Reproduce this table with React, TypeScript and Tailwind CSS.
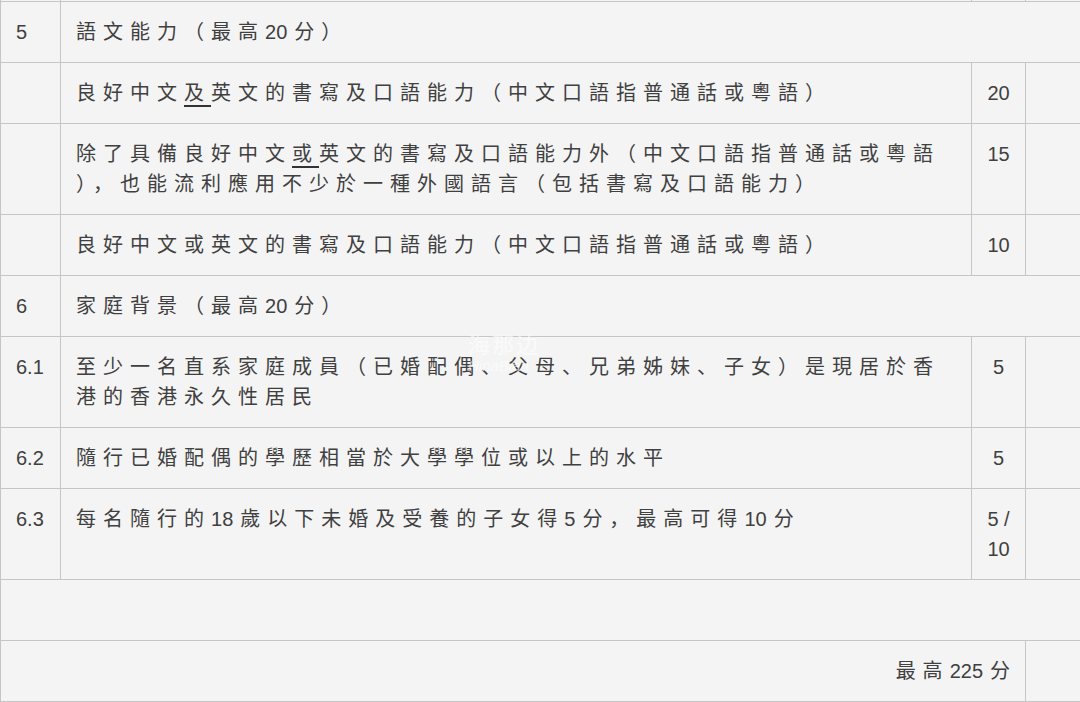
import React from 'react';

const font = { fontFamily: '"Liberation Sans", "Noto Sans CJK SC", sans-serif' };

// digits stay tight, CJK gets spaced out like the source article
const Spaced = ({ text }: { text: string }) => {
    const parts = text.split(/(\d+)/);
    return (
        <>
            {parts.map((p, i) =>
                /^\d+$/.test(p) ? (
                    <React.Fragment key={i}>
                        <span className="tracking-normal">{p.slice(0, -1)}</span>
                        {p.slice(-1)}
                    </React.Fragment>
                ) : (
                    <React.Fragment key={i}>{p}</React.Fragment>
                )
            )}
        </>
    );
};

const U = ({ children }: { children: React.ReactNode }) => (
    <span className="underline decoration-[#333] underline-offset-[5px]">{children}</span>
);

const cell = 'border border-[#c6c6c6] align-top pt-[15px] pb-[15px] leading-[30px]';
const textCell = `${cell} px-[15px] tracking-[7px] whitespace-nowrap`;
const numCell = `${cell} text-center`;

const Row = ({ no, lines, score }: { no?: string; lines: React.ReactNode[]; score?: React.ReactNode }) => (
    <tr>
        <td className={`${cell} pl-[15px]`}>{no}</td>
        <td className={textCell}>
            {lines.map((l, i) => (
                <div key={i}>{l}</div>
            ))}
        </td>
        <td className={numCell}>{score}</td>
        <td className={cell}></td>
    </tr>
);

const Heading = ({ no, text }: { no: string; text: string }) => (
    <tr>
        <td className={`${cell} pl-[15px]`}>{no}</td>
        <td className={textCell} colSpan={3}>
            <Spaced text={text} />
        </td>
    </tr>
);

export default function App() {
    return (
        <div className="relative w-[1080px] h-[702px] overflow-hidden bg-[#f4f4f4] text-[20px] text-[#404040]" style={font}>
            {/* tail of the previous row */}
            <div className="flex h-px">
                <div className="w-[60px] border-l border-[#c6c6c6]" />
                <div className="w-[911px] border-l border-[#c6c6c6]" />
                <div className="w-[54px] border-l border-[#c6c6c6]" />
                <div className="w-[55px] border-l border-[#c6c6c6]" />
            </div>
            <table className="table-fixed border-collapse w-[1081px]">
                <colgroup>
                    <col className="w-[60px]" />
                    <col className="w-[911px]" />
                    <col className="w-[54px]" />
                    <col className="w-[56px]" />
                </colgroup>
                <tbody>
                    <Heading no="5" text="語文能力（最高20分）" />
                    <Row
                        lines={[<>良好中文<U>及</U>英文的書寫及口語能力（中文口語指普通話或粵語）</>]}
                        score="20"
                    />
                    <Row
                        lines={[
                            <>除了具備良好中文<U>或</U>英文的書寫及口語能力外（中文口語指普通話或粵語</>,
                            <>），也能流利應用不少於一種外國語言（包括書寫及口語能力）</>,
                        ]}
                        score="15"
                    />
                    <Row lines={['良好中文或英文的書寫及口語能力（中文口語指普通話或粵語）']} score="10" />
                    <Heading no="6" text="家庭背景（最高20分）" />
                    <Row
                        no="6.1"
                        lines={['至少一名直系家庭成員（已婚配偶、父母、兄弟姊妹、子女）是現居於香', '港的香港永久性居民']}
                        score="5"
                    />
                    <Row no="6.2" lines={['隨行已婚配偶的學歷相當於大學學位或以上的水平']} score="5" />
                    <Row
                        no="6.3"
                        lines={[<Spaced text="每名隨行的18歲以下未婚及受養的子女得5分，最高可得10分" />]}
                        score={<><div>5 /</div><div>10</div></>}
                    />
                    <tr>
                        <td className={cell} colSpan={4}>&nbsp;</td>
                    </tr>
                    <tr>
                        <td className={`${cell} text-right pr-[8px] tracking-[7px]`} colSpan={3}>
                            <Spaced text="最高225分" />
                        </td>
                        <td className={cell}></td>
                    </tr>
                </tbody>
            </table>

            {/* faint watermark */}
            <div className="absolute left-[468px] top-[334px] text-white/60 pointer-events-none">
                <div className="text-[22px] leading-[24px] tracking-[2px]">海那边</div>
                <div className="text-[15px] leading-[16px] italic">HinaBian</div>
            </div>
        </div>
    );
}
